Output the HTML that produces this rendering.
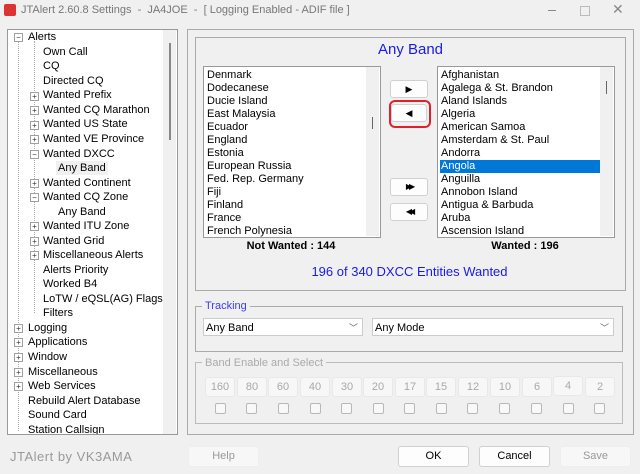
<!DOCTYPE html><html><head><style>
body{margin:0;width:640px;height:474px;background:#f0f0f0;font-family:"Liberation Sans",sans-serif;font-size:11px;color:#000;position:relative;overflow:hidden}
.a{position:absolute}
.tree div{position:absolute;left:0;white-space:nowrap;height:14px;line-height:14px}
.lst div{position:absolute;left:2px;right:0;height:13px;line-height:13px;padding-left:1px;white-space:nowrap}
.btn{position:absolute;background:#fdfdfd;border:1px solid #d0d0d0;border-radius:3px;text-align:center}
.bb{position:absolute;top:377px;width:28px;height:18px;background:#f7f7f7;border:1px solid #e8e8e8;border-radius:3px;color:#a8a8a8;text-align:center;line-height:18px;font-size:11px}
.cb{position:absolute;top:403px;width:9px;height:9px;border:1px solid #b8b8b8;border-radius:2px;background:#f8f8f8}
.pm{position:absolute;width:7px;height:7px;border:1px solid #a0a0a0;background:#fff;font-size:8px;line-height:7px;text-align:center;color:#333}
</style></head><body>
<div class="a" style="left:4px;top:4px;width:12px;height:12px;background:#d33;border-radius:2px"></div>
<div class="a" style="left:21px;top:4px;color:#777;font-size:11px">JTAlert 2.60.8 Settings &nbsp;- &nbsp;JA4JOE &nbsp;- &nbsp;[ Logging Enabled - ADIF file ]</div>
<div class="a" style="left:222px;top:3px;width:418px;height:16px"></div>
<div class="a" style="left:548px;top:10px;width:8px;height:1px;background:#888"></div>
<div class="a" style="left:580px;top:6px;width:8px;height:8px;border:1px solid #bbb"></div>
<div class="a" style="left:612px;top:1px;color:#888;font-size:14px">✕</div>

<div class="a" style="left:7px;top:29px;width:169px;height:404px;border:1px solid #999;background:#fff"></div>
<div class="a" style="left:163px;top:30px;width:13px;height:404px;background:#f0f0f0"></div>
<div class="a" style="left:169px;top:43px;width:2px;height:97px;background:#888"></div>
<div class="a tree" style="left:0;top:30px;width:163px;height:404px;overflow:hidden">
<div style="left:28px;top:0">Alerts</div>
<div style="left:43px;top:15px">Own Call</div>
<div style="left:43px;top:29px">CQ</div>
<div style="left:43px;top:44px">Directed CQ</div>
<div style="left:43px;top:58px">Wanted Prefix</div>
<div style="left:43px;top:73px">Wanted CQ Marathon</div>
<div style="left:43px;top:87px">Wanted US State</div>
<div style="left:43px;top:102px">Wanted VE Province</div>
<div style="left:43px;top:117px">Wanted DXCC</div>
<div style="left:56px;top:131px;background:#f0f0f0;padding:0 2px">Any Band</div>
<div style="left:43px;top:146px">Wanted Continent</div>
<div style="left:43px;top:160px">Wanted CQ Zone</div>
<div style="left:58px;top:175px">Any Band</div>
<div style="left:43px;top:189px">Wanted ITU Zone</div>
<div style="left:43px;top:204px">Wanted Grid</div>
<div style="left:43px;top:218px">Miscellaneous Alerts</div>
<div style="left:43px;top:233px">Alerts Priority</div>
<div style="left:43px;top:247px">Worked B4</div>
<div style="left:43px;top:262px">LoTW / eQSL(AG) Flags</div>
<div style="left:43px;top:276px">Filters</div>
<div style="left:28px;top:291px">Logging</div>
<div style="left:28px;top:305px">Applications</div>
<div style="left:28px;top:320px">Window</div>
<div style="left:28px;top:335px">Miscellaneous</div>
<div style="left:28px;top:349px">Web Services</div>
<div style="left:28px;top:364px">Rebuild Alert Database</div>
<div style="left:28px;top:378px">Sound Card</div>
<div style="left:28px;top:393px">Station Callsign</div>
</div>
<div class="a" style="left:18px;top:41px;border-left:1px dotted #aaa;height:390px"></div>
<div class="a" style="left:34px;top:41px;border-left:1px dotted #aaa;height:272px"></div>
<div class="pm" style="left:14px;top:33px">−</div>
<div class="pm" style="left:30px;top:92px">+</div><div class="pm" style="left:30px;top:106px">+</div><div class="pm" style="left:30px;top:121px">+</div><div class="pm" style="left:30px;top:135px">+</div><div class="pm" style="left:30px;top:150px">−</div><div class="pm" style="left:30px;top:179px">+</div><div class="pm" style="left:30px;top:193px">−</div><div class="pm" style="left:30px;top:222px">+</div><div class="pm" style="left:30px;top:237px">+</div><div class="pm" style="left:30px;top:251px">+</div>
<div class="pm" style="left:14px;top:324px">+</div><div class="pm" style="left:14px;top:338px">+</div><div class="pm" style="left:14px;top:353px">+</div><div class="pm" style="left:14px;top:368px">+</div><div class="pm" style="left:14px;top:382px">+</div>

<div class="a" style="left:187px;top:29px;width:445px;height:404px;border:1px solid #aaa"></div>
<div class="a" style="left:195px;top:37px;width:429px;height:252px;border:1px solid #aaa"></div>
<div class="a" style="left:195px;top:41px;width:431px;text-align:center;color:#1a1aee;font-size:15px">Any Band</div>

<div class="a lst" style="left:203px;top:66px;width:176px;height:170px;border:1px solid #999;background:#fff;overflow:hidden">
<div style="top:2px">Denmark</div><div style="top:15px">Dodecanese</div><div style="top:28px">Ducie Island</div><div style="top:41px">East Malaysia</div><div style="top:54px">Ecuador</div><div style="top:67px">England</div><div style="top:80px">Estonia</div><div style="top:93px">European Russia</div><div style="top:106px">Fed. Rep. Germany</div><div style="top:119px">Fiji</div><div style="top:132px">Finland</div><div style="top:145px">France</div><div style="top:158px">French Polynesia</div>
</div>
<div class="a" style="left:366px;top:67px;width:13px;height:169px;background:#f0f0f0"></div>
<div class="a" style="left:372px;top:117px;width:1px;height:12px;background:#666"></div>

<div class="a lst" style="left:437px;top:66px;width:176px;height:170px;border:1px solid #999;background:#fff;overflow:hidden">
<div style="top:2px">Afghanistan</div><div style="top:15px">Agalega &amp; St. Brandon</div><div style="top:28px">Aland Islands</div><div style="top:41px">Algeria</div><div style="top:54px">American Samoa</div><div style="top:67px">Amsterdam &amp; St. Paul</div><div style="top:80px">Andorra</div><div style="top:93px;background:#0078d7;color:#fff;right:14px">Angola</div><div style="top:106px">Anguilla</div><div style="top:119px">Annobon Island</div><div style="top:132px">Antigua &amp; Barbuda</div><div style="top:145px">Aruba</div><div style="top:158px">Ascension Island</div>
</div>
<div class="a" style="left:600px;top:67px;width:13px;height:169px;background:#f0f0f0"></div>
<div class="a" style="left:606px;top:81px;width:1px;height:13px;background:#666"></div>

<div class="btn" style="left:390px;top:80px;width:36px;height:16px;font-size:9px;line-height:16px">▶</div>
<div class="a" style="left:389px;top:100px;width:38px;height:24px;border:2px solid #e0202a;border-radius:6px"></div>
<div class="btn" style="left:391px;top:104px;width:34px;height:16px;font-size:9px;line-height:16px">◀</div>
<div class="btn" style="left:390px;top:178px;width:36px;height:16px;font-size:8px;line-height:16px;letter-spacing:-3px">▶▶</div>
<div class="btn" style="left:390px;top:203px;width:36px;height:16px;font-size:8px;line-height:16px;letter-spacing:-3px">◀◀</div>

<div class="a" style="left:203px;top:240px;width:176px;text-align:center;font-weight:bold">Not Wanted : 144</div>
<div class="a" style="left:437px;top:240px;width:176px;text-align:center;font-weight:bold">Wanted : 196</div>
<div class="a" style="left:195px;top:264px;width:429px;text-align:center;color:#1a1aee;font-size:13px">196 of 340 DXCC Entities Wanted</div>

<div class="a" style="left:195px;top:306px;width:426px;height:44px;border:1px solid #aaa"></div>
<div class="a" style="left:202px;top:300px;background:#f0f0f0;padding:0 3px;color:#3c3cf0">Tracking</div>
<div class="a" style="left:203px;top:318px;width:160px;height:18px;border:1px solid #ccc;background:#fff;line-height:18px;padding-left:2px;box-sizing:border-box">Any Band<span style="position:absolute;right:4px;color:#666;font-size:9px">﹀</span></div>
<div class="a" style="left:372px;top:318px;width:242px;height:18px;border:1px solid #ccc;background:#fff;line-height:18px;padding-left:2px;box-sizing:border-box">Any Mode<span style="position:absolute;right:4px;color:#666;font-size:9px">﹀</span></div>

<div class="a" style="left:195px;top:362px;width:426px;height:60px;border:1px solid #bbb"></div>
<div class="a" style="left:202px;top:357px;background:#f0f0f0;padding:0 3px;color:#aaa">Band Enable and Select</div>
<div class="bb" style="left:205px">160</div><div class="bb" style="left:237px">80</div><div class="bb" style="left:268px">60</div><div class="bb" style="left:300px">40</div><div class="bb" style="left:332px">30</div><div class="bb" style="left:363px">20</div><div class="bb" style="left:395px">17</div><div class="bb" style="left:426px">15</div><div class="bb" style="left:458px">12</div><div class="bb" style="left:490px">10</div><div class="bb" style="left:522px">6</div><div class="bb" style="left:553px;top:376px">4</div><div class="bb" style="left:585px">2</div>
<div class="cb" style="left:215px"></div><div class="cb" style="left:246px"></div><div class="cb" style="left:278px"></div><div class="cb" style="left:310px"></div><div class="cb" style="left:341px"></div><div class="cb" style="left:373px"></div><div class="cb" style="left:404px"></div><div class="cb" style="left:436px"></div><div class="cb" style="left:467px"></div><div class="cb" style="left:499px"></div><div class="cb" style="left:531px"></div><div class="cb" style="left:563px"></div><div class="cb" style="left:594px"></div>

<div class="a" style="left:10px;top:449px;color:#999;font-size:13px;letter-spacing:0.5px">JTAlert by VK3AMA</div>
<div class="btn" style="left:188px;top:446px;width:69px;height:19px;line-height:19px;color:#999;background:#f7f7f7;border-color:#eee">Help</div>
<div class="btn" style="left:398px;top:446px;width:69px;height:19px;line-height:19px">OK</div>
<div class="btn" style="left:479px;top:446px;width:69px;height:19px;line-height:19px">Cancel</div>
<div class="btn" style="left:560px;top:446px;width:69px;height:19px;line-height:19px;color:#999;background:#f7f7f7;border-color:#eee">Save</div>
</body></html>
